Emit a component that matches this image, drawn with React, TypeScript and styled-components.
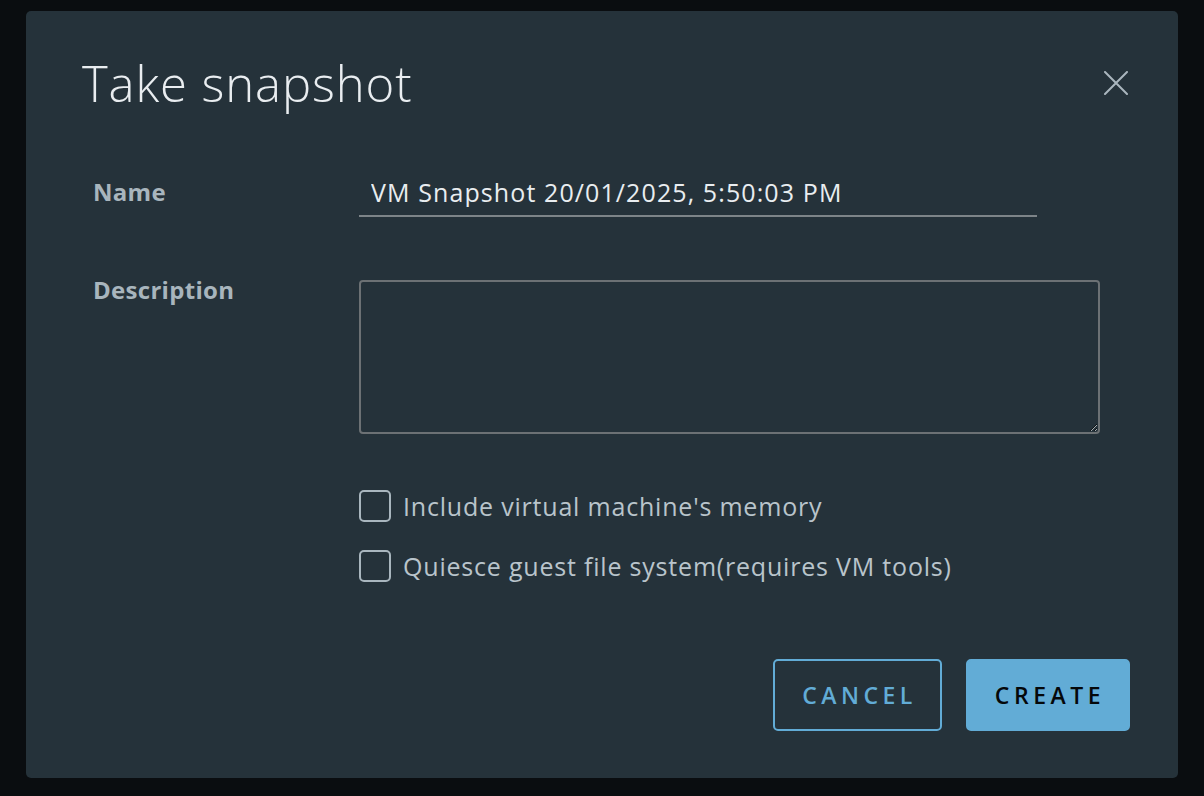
import React from "react";
import styled, { createGlobalStyle } from "styled-components";

const GlobalStyle = createGlobalStyle`
  html, body {
    margin: 0;
    padding: 0;
    background: #0a0d10;
    font-family: "Open Sans", "Noto Sans", sans-serif;
  }
`;

const Page = styled.div`
  width: 1204px;
  height: 796px;
  padding: 11px 26px 18px;
  box-sizing: border-box;
`;

const Dialog = styled.div`
  height: 100%;
  background: #25323a;
  border-radius: 5px;
  padding: 48px 48px 47px 56px;
  box-sizing: border-box;
  display: flex;
  flex-direction: column;
`;

const Header = styled.div`
  display: flex;
  justify-content: space-between;
  align-items: center;
  padding-right: 2px;
`;

const Title = styled.h1`
  margin: 0;
  font-size: 49px;
  font-weight: 300;
  line-height: 48px;
  color: #e9edf0;
  letter-spacing: 0.9px;
`;

const CloseButton = styled.button`
  width: 24px;
  height: 24px;
  padding: 0;
  border: none;
  background: none;
  cursor: pointer;
  display: flex;
`;

const Form = styled.div`
  display: grid;
  grid-template-columns: 266px 1fr;
  margin-top: 70px;
  padding-left: 11px;
  flex: 1;
  align-content: start;
`;

const Label = styled.label<{ top: number }>`
  font-size: 24px;
  font-weight: 700;
  color: #a8b5bd;
  line-height: 30px;
  letter-spacing: 0.3px;
  padding-top: ${(p) => p.top}px;
`;

const TextInput = styled.input`
  width: 678px;
  box-sizing: border-box;
  background: transparent;
  border: none;
  border-bottom: 2px solid #7d8488;
  color: #e9edf0;
  font-family: inherit;
  font-size: 25px;
  line-height: 30px;
  padding: 0 12px 8px;
  outline: none;
  letter-spacing: 1.1px;
`;

const TextArea = styled.textarea`
  width: 741px;
  height: 154px;
  box-sizing: border-box;
  margin-top: 63px;
  background: transparent;
  border: 2px solid #6c7174;
  border-radius: 4px;
  color: #e9edf0;
  font-family: inherit;
  font-size: 20px;
  resize: both;
  outline: none;
`;

const Options = styled.div`
  grid-column: 2;
  display: flex;
  flex-direction: column;
  gap: 26px;
  margin-top: 50px;
`;

const OptionRow = styled.label`
  display: flex;
  align-items: center;
  gap: 12px;
  color: #b9c4cb;
  font-size: 25px;
  letter-spacing: 0.8px;
  cursor: pointer;
`;

const Checkbox = styled.input`
  appearance: none;
  margin: 0;
  width: 32px;
  height: 32px;
  border: 2px solid #a9b6be;
  border-radius: 5px;
  box-sizing: border-box;
  flex-shrink: 0;
`;

const Footer = styled.div`
  display: flex;
  justify-content: flex-end;
  gap: 24px;
`;

const Button = styled.button<{ primary?: boolean }>`
  height: 72px;
  padding: 0 23px 0 27px;
  box-sizing: border-box;
  border-radius: 5px;
  border: 2px solid #62acd6;
  background: ${(p) => (p.primary ? "#62acd6" : "transparent")};
  color: ${(p) => (p.primary ? "#05080a" : "#62acd6")};
  font-family: inherit;
  font-size: 23px;
  font-weight: 600;
  letter-spacing: 4.5px;
  cursor: pointer;
`;

export default function App() {
  return (
    <>
      <GlobalStyle />
      <Page>
        <Dialog>
          <Header>
            <Title>Take snapshot</Title>
            <CloseButton aria-label="Close">
              <svg width="24" height="24" viewBox="0 0 24 24">
                <path d="M1 1 L23 23 M23 1 L1 23" stroke="#aab6be" strokeWidth="2" strokeLinecap="round" />
              </svg>
            </CloseButton>
          </Header>
          <Form>
            <Label top={0}>Name</Label>
            <div>
              <TextInput defaultValue="VM Snapshot 20/01/2025, 5:50:03 PM" />
            </div>
            <Label top={58}>Description</Label>
            <div>
              <TextArea />
            </div>
            <Options>
              <OptionRow>
                <Checkbox type="checkbox" />
                Include virtual machine's memory
              </OptionRow>
              <OptionRow>
                <Checkbox type="checkbox" />
                Quiesce guest file system(requires VM tools)
              </OptionRow>
            </Options>
          </Form>
          <Footer>
            <Button>CANCEL</Button>
            <Button primary>CREATE</Button>
          </Footer>
        </Dialog>
      </Page>
    </>
  );
}
